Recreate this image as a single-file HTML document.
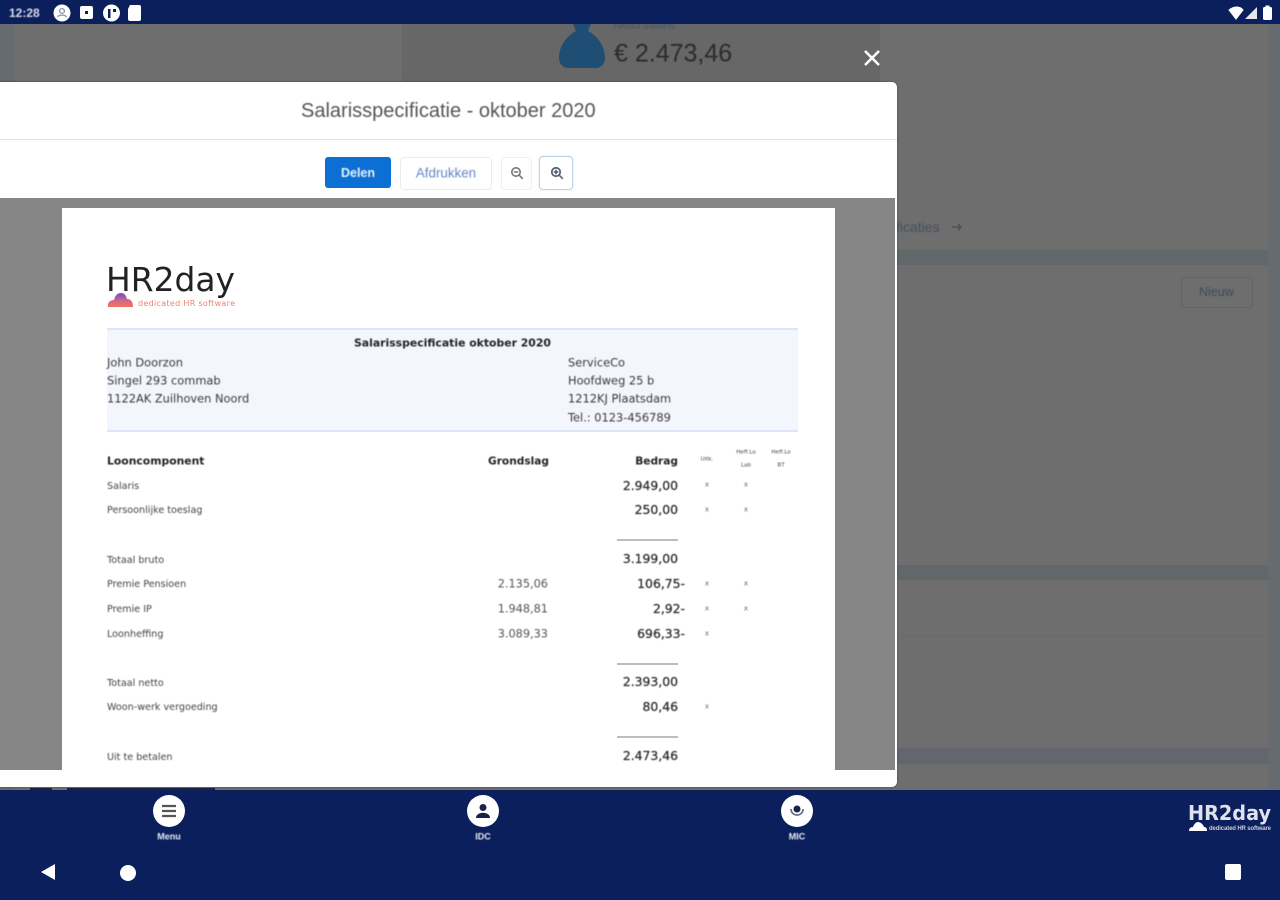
<!DOCTYPE html>
<html lang="nl">
<head>
<meta charset="utf-8">
<title>Salarisspecificatie</title>
<style>
html,body{margin:0;padding:0;width:1280px;height:900px;overflow:hidden;background:#6d6d6d}
#s{position:relative;width:1280px;height:900px;overflow:hidden;font-family:"Liberation Sans",sans-serif}
.b{position:absolute}
.t{position:absolute;white-space:nowrap;transform:translateY(-50%);line-height:1;filter:blur(.45px)}
.d{font-family:"DejaVu Sans",sans-serif;color:#333}
.l{font-size:9.6px;left:107px;color:#444;margin-top:1.5px}
.h{font-weight:bold;color:#222}
.a{font-size:11.4px;left:107px;color:#3a3a3a}
.v{font-size:12.4px;color:#2a2a2a;right:602px;-webkit-text-stroke:.25px #2a2a2a;margin-top:1px}
.g{font-size:11.3px;color:#555;right:732px;margin-top:1px}
.m{font-size:7px;color:#666;width:20px;text-align:center;margin-top:1px}
.c{font-size:5.5px;color:#444;width:40px;text-align:center}
.r{position:absolute;left:617px;width:61px;height:2px;background:#bdbdbd}
.n{position:absolute;width:32px;height:32px;border-radius:50%;background:#fff;top:795px}
.nl{font-size:9px;font-weight:bold;color:#e8ebf3;width:60px;text-align:center}
</style>
</head>
<body>
<div id="s">
<!-- background -->
<div class="b" style="left:0;top:24px;width:1280px;height:766px;background:#6e6e6e"></div>
<div class="b" style="left:0;top:24px;width:14px;height:766px;background:#656b70"></div>
<div class="b" style="left:1268px;top:24px;width:12px;height:766px;background:#656b6e"></div>
<div class="b" style="left:402px;top:24px;width:478px;height:58px;background:#676767"></div>
<div class="b" style="left:897px;top:250px;width:371px;height:15px;background:#62676a"></div>
<div class="b" style="left:897px;top:565px;width:371px;height:15px;background:#62676a"></div>
<div class="b" style="left:897px;top:636px;width:371px;height:1px;background:#6a6a6a"></div>
<div class="b" style="left:897px;top:748px;width:371px;height:16px;background:#63676d"></div>
<svg class="b" style="left:556px;top:22px" width="52" height="48" viewBox="0 0 52 48"><path d="M17 2h18l-3 7c8 4 17 14 17 27 0 6-4 10-9 10H13c-6 0-10-4-10-10C3 23 12 13 20 9z" fill="#1f4e74"/></svg>
<div class="t" style="left:614px;top:26px;font-size:11px;color:#41566b">Netto salaris</div>
<div class="t" style="left:614px;top:54px;font-size:25px;color:#2b2b2b">€ 2.473,46</div>
<div class="t" style="left:896px;top:227px;font-size:14px;color:#46505a">ficaties</div>
<svg class="b" style="left:951px;top:221px" width="12" height="12" viewBox="0 0 12 12"><path d="M1 6h9M7 3l3 3-3 3" fill="none" stroke="#46505a" stroke-width="1.300"/></svg>
<div class="b" style="left:1181px;top:277px;width:70px;height:29px;border:1px solid #646464;border-radius:4px"></div>
<div class="t" style="left:1199px;top:292px;font-size:12.5px;color:#3f4a58">Nieuw</div>
<!-- close -->
<svg class="b" style="left:862px;top:48px" width="20" height="20" viewBox="0 0 20 20"><path d="M3 3L17 17M17 3L3 17" stroke="#fff" stroke-width="2.600"/></svg>
<!-- modal -->
<div class="b" style="left:0;top:82px;width:897px;height:705px;background:#fff;border-radius:0 5px 5px 0;box-shadow:0 0 2px #444"></div>
<div class="t" style="left:301px;top:111px;font-size:20px;color:#555">Salarisspecificatie - oktober 2020</div>
<div class="b" style="left:0;top:139px;width:897px;height:1px;background:#e4e4e4"></div>
<div class="b" style="left:325px;top:157px;width:66px;height:31px;background:#0b6fd3;border-radius:3px"></div>
<div class="t" style="left:325px;width:66px;text-align:center;top:173px;font-size:12.5px;font-weight:bold;color:#eaf2fb">Delen</div>
<div class="b" style="left:400px;top:157px;width:90px;height:31px;border:1px solid #e9edf2;border-radius:4px"></div>
<div class="t" style="left:400px;width:92px;text-align:center;top:173px;font-size:13.4px;color:#6487c9">Afdrukken</div>
<div class="b" style="left:501px;top:157px;width:29px;height:31px;border:1px solid #eceff3;border-radius:4px"></div>
<svg class="b" style="left:509px;top:165px" width="16" height="16" viewBox="0 0 16 16"><circle cx="7" cy="7" r="4.200" fill="none" stroke="#777" stroke-width="1.600"/><path d="M4.800 7h4.400M10.300 10.300l3.500 3.500" stroke="#777" stroke-width="1.600"/></svg>
<div class="b" style="left:539px;top:156px;width:32px;height:32px;border:1px solid #b6d3ea;border-radius:4px;box-shadow:0 0 2px #d5e6f3"></div>
<svg class="b" style="left:549px;top:165px" width="16" height="16" viewBox="0 0 16 16"><circle cx="7" cy="7" r="4.200" fill="none" stroke="#5c6478" stroke-width="1.800"/><path d="M4.800 7h4.400M7 4.800v4.400M10.300 10.300l3.500 3.500" stroke="#5c6478" stroke-width="1.700"/></svg>
<!-- viewer -->
<div class="b" style="left:0;top:198px;width:895px;height:572px;background:#868686"></div>
<div class="b" style="left:62px;top:208px;width:773px;height:562px;background:#fff"></div>
<!-- logo -->
<svg class="b" style="left:100px;top:256px" width="150" height="56" viewBox="0 0 150 56"><defs><linearGradient id="cl" x1="0" y1="0" x2="0" y2="1"><stop offset="0" stop-color="#6a4fd0"/><stop offset=".6" stop-color="#d86a80"/><stop offset="1" stop-color="#f2705a"/></linearGradient></defs><text x="6" y="35" font-family="'DejaVu Sans',sans-serif" font-size="33" textLength="129" lengthAdjust="spacingAndGlyphs" fill="#222">HR2day</text><path d="M8 51c-1-5 3-7 6-7 1-5 4-7 7-7s5 2 6 6c4 0 6 3 6 8z" fill="url(#cl)"/><text x="38" y="50" font-family="'DejaVu Sans',sans-serif" font-size="8" textLength="97" fill="#f08070">dedicated HR software</text></svg>
<!-- band -->
<div class="b" style="left:107px;top:328px;width:691px;height:100px;background:#f4f6fd;border-top:2px solid #dde6f8;border-bottom:2px solid #dde6f8"></div>
<div class="t d h" style="left:354px;top:344px;font-size:10.85px">Salarisspecificatie oktober 2020</div>
<div class="t d a" style="top:363px">John Doorzon</div>
<div class="t d a" style="top:381px">Singel 293 commab</div>
<div class="t d a" style="top:399px">1122AK Zuilhoven Noord</div>
<div class="t d a" style="left:568px;top:363px">ServiceCo</div>
<div class="t d a" style="left:568px;top:381px">Hoofdweg 25 b</div>
<div class="t d a" style="left:568px;top:399px">1212KJ Plaatsdam</div>
<div class="t d a" style="left:568px;top:418px">Tel.: 0123-456789</div>
<!-- table head -->
<div class="t d h" style="left:107px;top:462px;font-size:10.8px">Looncomponent</div>
<div class="t d h" style="right:731px;top:462px;font-size:10.6px">Grondslag</div>
<div class="t d h" style="right:602px;top:462px;font-size:10.6px">Bedrag</div>
<div class="t d c" style="left:687px;top:460px">Uitk.</div>
<div class="t d c" style="left:726px;top:453px">Heff.Lo</div>
<div class="t d c" style="left:726px;top:466px">Lab</div>
<div class="t d c" style="left:761px;top:453px">Heff.Lo</div>
<div class="t d c" style="left:761px;top:466px">BT</div>
<!-- rows -->
<div class="t d l" style="top:485px">Salaris</div>
<div class="t d l" style="top:509px">Persoonlijke toeslag</div>
<div class="t d l" style="top:559px">Totaal bruto</div>
<div class="t d l" style="top:583px">Premie Pensioen</div>
<div class="t d l" style="top:608px">Premie IP</div>
<div class="t d l" style="top:633px">Loonheffing</div>
<div class="t d l" style="top:682px">Totaal netto</div>
<div class="t d l" style="top:706px">Woon-werk vergoeding</div>
<div class="t d l" style="top:756px">Uit te betalen</div>
<div class="t d g" style="top:583px">2.135,06</div>
<div class="t d g" style="top:608px">1.948,81</div>
<div class="t d g" style="top:633px">3.089,33</div>
<div class="t d v" style="top:485px">2.949,00</div>
<div class="t d v" style="top:509px">250,00</div>
<div class="r" style="top:539px"></div>
<div class="t d v" style="top:558px">3.199,00</div>
<div class="t d v" style="top:583px;right:595px">106,75-</div>
<div class="t d v" style="top:608px;right:595px">2,92-</div>
<div class="t d v" style="top:633px;right:595px">696,33-</div>
<div class="r" style="top:663px"></div>
<div class="t d v" style="top:681px">2.393,00</div>
<div class="t d v" style="top:706px">80,46</div>
<div class="r" style="top:736px"></div>
<div class="t d v" style="top:755px">2.473,46</div>
<div class="t d m" style="left:697px;top:484px">x</div>
<div class="t d m" style="left:736px;top:484px">x</div>
<div class="t d m" style="left:697px;top:509px">x</div>
<div class="t d m" style="left:736px;top:509px">x</div>
<div class="t d m" style="left:697px;top:583px">x</div>
<div class="t d m" style="left:736px;top:583px">x</div>
<div class="t d m" style="left:697px;top:608px">x</div>
<div class="t d m" style="left:736px;top:608px">x</div>
<div class="t d m" style="left:697px;top:633px">x</div>
<div class="t d m" style="left:697px;top:706px">x</div>
<!-- strip under modal -->
<div class="b" style="left:30px;top:788px;width:22px;height:2px;background:#1c2340"></div>
<div class="b" style="left:67px;top:788px;width:148px;height:2px;background:#1c2340"></div>
<!-- status bar -->
<div class="b" style="left:0;top:0;width:1280px;height:24px;background:#0b1f5c"></div>
<div class="t" style="left:9px;top:13px;font-size:12px;font-weight:bold;color:#d8dbe6">12:28</div>
<svg class="b" style="left:52px;top:3px" width="92" height="20" viewBox="0 0 92 20"><circle cx="10" cy="10" r="8.500" fill="#fff"/><circle cx="10" cy="8" r="2.400" fill="none" stroke="#8a93ad" stroke-width="1.300"/><path d="M5.500 14c1-2.500 8-2.500 9 0" fill="none" stroke="#8a93ad" stroke-width="1.300"/><rect x="28" y="3" width="13" height="13" rx="2" fill="#fff"/><rect x="33" y="8" width="3" height="3" fill="#0b1f5c"/><circle cx="59.500" cy="10" r="8.500" fill="#fff"/><path d="M56 6h2.500v9H56zM61 6h3v3h-3z" fill="#0b1f5c"/><path d="M78 2h9a2 2 0 0 1 2 2v12a2 2 0 0 1-2 2h-9a2 2 0 0 1-2-2V6z" fill="#fff"/></svg>
<svg class="b" style="left:1226px;top:4px" width="50" height="18" viewBox="0 0 50 18"><path d="M3 6c5-4 11-4 14 0l-7 9z" fill="#fff" stroke="#fff"/><path d="M19 15L31 3v12z" fill="#e4e6ec"/><rect x="37" y="3" width="9" height="13" rx="1.500" fill="#fff"/><rect x="39.500" y="1.500" width="4" height="2" fill="#fff"/></svg>
<!-- bottom bar -->
<div class="b" style="left:0;top:790px;width:1280px;height:110px;background:#0b1f5c"></div>
<div class="n" style="left:153px"></div>
<svg class="b" style="left:160px;top:802px" width="18" height="18" viewBox="0 0 18 18"><path d="M2 4h14M2 9h14M2 14h14" stroke="#555" stroke-width="2.200"/></svg>
<div class="t nl" style="left:139px;top:837px">Menu</div>
<div class="n" style="left:467px"></div>
<svg class="b" style="left:474px;top:802px" width="18" height="18" viewBox="0 0 18 18"><circle cx="9" cy="5.500" r="3.500" fill="#182447"/><path d="M2 16c0-7 14-7 14 0z" fill="#182447"/></svg>
<div class="t nl" style="left:453px;top:837px">IDC</div>
<div class="n" style="left:781px"></div>
<svg class="b" style="left:788px;top:802px" width="18" height="18" viewBox="0 0 18 18"><circle cx="9" cy="7" r="3.500" fill="#182447"/><path d="M3 7c0 8 12 8 12 0" fill="none" stroke="#6a7288" stroke-width="1.800"/></svg>
<div class="t nl" style="left:767px;top:837px">MIC</div>
<svg class="b" style="left:1186px;top:798px" width="90" height="38" viewBox="0 0 90 38"><text x="2" y="22" font-family="'DejaVu Sans',sans-serif" font-size="20" font-weight="bold" textLength="83" lengthAdjust="spacingAndGlyphs" fill="#dfe2ea">HR2day</text><path d="M3 33c0-3 2-4 4-4 1-3 3-5 5-5s5 2 6 5c2 0 3 1 3 4z" fill="#fff"/><text x="23" y="32" font-family="'Liberation Sans',sans-serif" font-size="6" font-weight="bold" textLength="62" fill="#c8ccd8">dedicated HR software</text></svg>
<svg class="b" style="left:38px;top:862px" width="20" height="20" viewBox="0 0 20 20"><path d="M17 2v16L3 10z" fill="#fff"/></svg>
<div class="b" style="left:120px;top:865px;width:16px;height:16px;border-radius:50%;background:#fff"></div>
<div class="b" style="left:1225px;top:864px;width:16px;height:16px;border-radius:2px;background:#fff"></div>
</div>
</body>
</html>
